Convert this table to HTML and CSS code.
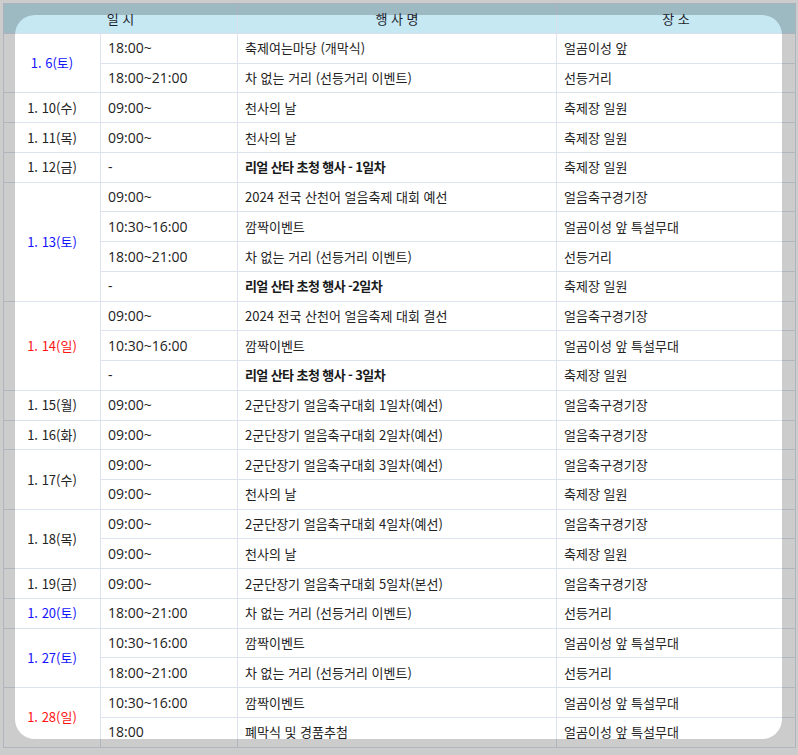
FILE: index.html
```html
<!DOCTYPE html>
<html lang="ko">
<head>
<meta charset="utf-8">
<link rel="stylesheet" href="styles.css">
</head>
<body>
<div class="page">
<table class="sched">
  <colgroup>
    <col class="c-date"><col class="c-time"><col class="c-name"><col class="c-place">
  </colgroup>
  <thead>
    <tr><th colspan="2">일 시</th><th>행 사 명</th><th>장 소</th></tr>
  </thead>
  <tbody>
    <tr><td class="date sat" rowspan="2">1. 6(토)</td><td class="time">18:00~</td><td>축제여는마당 (개막식)</td><td>얼곰이성 앞</td></tr>
    <tr><td class="time">18:00~21:00</td><td>차 없는 거리 (선등거리 이벤트)</td><td>선등거리</td></tr>
    <tr><td class="date">1. 10(수)</td><td class="time">09:00~</td><td>천사의 날</td><td>축제장 일원</td></tr>
    <tr><td class="date">1. 11(목)</td><td class="time">09:00~</td><td>천사의 날</td><td>축제장 일원</td></tr>
    <tr><td class="date">1. 12(금)</td><td class="time">-</td><td><b>리얼 산타 초청 행사 - 1일차</b></td><td>축제장 일원</td></tr>
    <tr><td class="date sat" rowspan="4">1. 13(토)</td><td class="time">09:00~</td><td>2024 전국 산천어 얼음축제 대회 예선</td><td>얼음축구경기장</td></tr>
    <tr><td class="time">10:30~16:00</td><td>깜짝이벤트</td><td>얼곰이성 앞 특설무대</td></tr>
    <tr><td class="time">18:00~21:00</td><td>차 없는 거리 (선등거리 이벤트)</td><td>선등거리</td></tr>
    <tr><td class="time">-</td><td><b>리얼 산타 초청 행사 -2일차</b></td><td>축제장 일원</td></tr>
    <tr><td class="date sun" rowspan="3">1. 14(일)</td><td class="time">09:00~</td><td>2024 전국 산천어 얼음축제 대회 결선</td><td>얼음축구경기장</td></tr>
    <tr><td class="time">10:30~16:00</td><td>깜짝이벤트</td><td>얼곰이성 앞 특설무대</td></tr>
    <tr><td class="time">-</td><td><b>리얼 산타 초청 행사 - 3일차</b></td><td>축제장 일원</td></tr>
    <tr><td class="date">1. 15(월)</td><td class="time">09:00~</td><td>2군단장기 얼음축구대회 1일차(예선)</td><td>얼음축구경기장</td></tr>
    <tr><td class="date">1. 16(화)</td><td class="time">09:00~</td><td>2군단장기 얼음축구대회 2일차(예선)</td><td>얼음축구경기장</td></tr>
    <tr><td class="date" rowspan="2">1. 17(수)</td><td class="time">09:00~</td><td>2군단장기 얼음축구대회 3일차(예선)</td><td>얼음축구경기장</td></tr>
    <tr><td class="time">09:00~</td><td>천사의 날</td><td>축제장 일원</td></tr>
    <tr><td class="date" rowspan="2">1. 18(목)</td><td class="time">09:00~</td><td>2군단장기 얼음축구대회 4일차(예선)</td><td>얼음축구경기장</td></tr>
    <tr><td class="time">09:00~</td><td>천사의 날</td><td>축제장 일원</td></tr>
    <tr><td class="date">1. 19(금)</td><td class="time">09:00~</td><td>2군단장기 얼음축구대회 5일차(본선)</td><td>얼음축구경기장</td></tr>
    <tr><td class="date sat">1. 20(토)</td><td class="time">18:00~21:00</td><td>차 없는 거리 (선등거리 이벤트)</td><td>선등거리</td></tr>
    <tr><td class="date sat" rowspan="2">1. 27(토)</td><td class="time">10:30~16:00</td><td>깜짝이벤트</td><td>얼곰이성 앞 특설무대</td></tr>
    <tr><td class="time">18:00~21:00</td><td>차 없는 거리 (선등거리 이벤트)</td><td>선등거리</td></tr>
    <tr><td class="date sun" rowspan="2">1. 28(일)</td><td class="time">10:30~16:00</td><td>깜짝이벤트</td><td>얼곰이성 앞 특설무대</td></tr>
    <tr><td class="time">18:00</td><td>폐막식 및 경품추첨</td><td>얼곰이성 앞 특설무대</td></tr>
  </tbody>
</table>
<div class="spotlight"></div>
</div>
</body>
</html>
```
FILE: styles.css
```css
html, body {
  margin: 0;
  padding: 0;
  background: #ffffff;
  overflow: hidden;
}
.page {
  position: relative;
  width: 798px;
  height: 755px;
  padding: 3px 0 0 3px;
  box-sizing: border-box;
  font-family: "Noto Sans CJK KR", "Noto Sans", sans-serif;
  font-size: 13px;
  color: #222222;
}
.sched {
  width: 792px;
  border-collapse: collapse;
  table-layout: fixed;
  border: 1px solid #d8dfea;
}
.c-date { width: 97px; }
.c-time { width: 137px; }
.c-name { width: 319px; }
.c-place { width: 239px; }
.sched th {
  background: #c5e8f2;
  font-weight: normal;
  color: #1e1e2e;
  height: 29px;
  padding: 0;
  border: 1px solid #d8dfea;
  text-align: center;
  line-height: 18px;
}
.sched td {
  border: 1px solid #dde3ee;
  padding: 0 7px;
  height: 28.74px;
  line-height: 18px;
  text-align: left;
  white-space: nowrap;
}
.sched td.time {
  font-family: "Open Sans", "Noto Sans CJK KR", sans-serif;
  font-size: 14px;
}
.sched td.date {
  text-align: center;
  padding: 0;
}
.sched td.sat { color: #1414ff; }
.sched td.sun { color: #ff1414; }
.sched b {
  font-weight: bold;
  color: #1a1a1a;
  letter-spacing: -0.6px;
}
.spotlight {
  position: absolute;
  left: 15px;
  top: 15px;
  width: 767px;
  height: 724px;
  border-radius: 20px;
  box-shadow: 0 0 0 2000px rgba(0, 0, 0, 0.2);
  pointer-events: none;
}
```
